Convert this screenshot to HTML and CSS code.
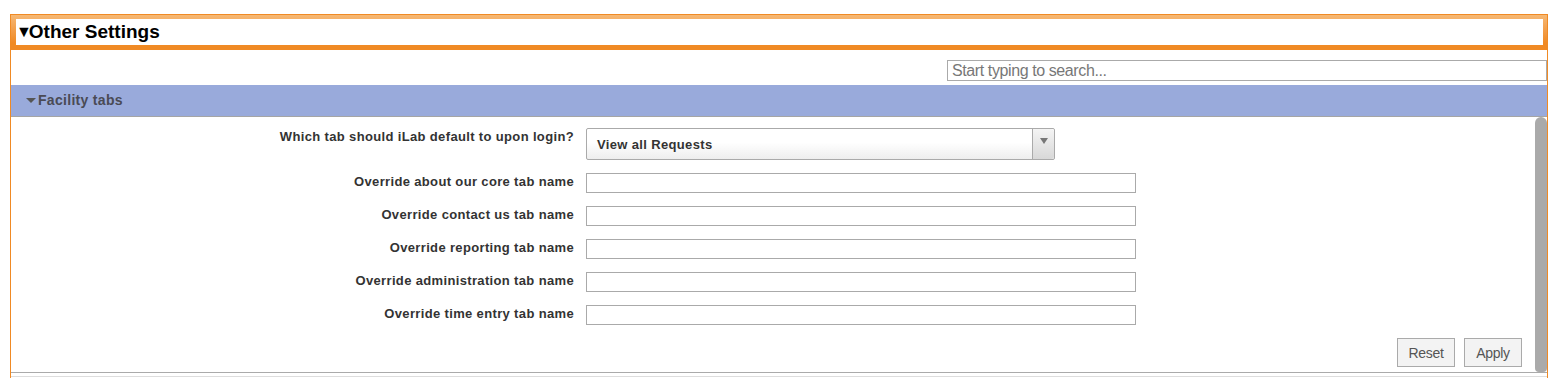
FILE: index.html
```html
<!DOCTYPE html>
<html>
<head>
<meta charset="utf-8">
<link rel="stylesheet" href="styles.css">
</head>
<body>
<div class="panel">
  <div class="panel-head">
    <div class="panel-title"><span class="tri">▼</span>Other Settings</div>
  </div>
  <div class="panel-body">
    <div class="search-row">
      <input class="search" type="text" placeholder="Start typing to search...">
    </div>
    <div class="section-bar"><span class="sec-tri"></span>Facility tabs</div>
    <div class="section-body">
      <div class="form">
        <div class="row row-select">
          <label class="lbl">Which tab should iLab default to upon login?</label>
          <div class="select">
            <span class="select-text">View all Requests</span>
            <span class="select-btn"><span class="select-arrow"></span></span>
          </div>
        </div>
        <div class="row">
          <label class="lbl">Override about our core tab name</label>
          <input class="field" type="text">
        </div>
        <div class="row">
          <label class="lbl">Override contact us tab name</label>
          <input class="field" type="text">
        </div>
        <div class="row">
          <label class="lbl">Override reporting tab name</label>
          <input class="field" type="text">
        </div>
        <div class="row">
          <label class="lbl">Override administration tab name</label>
          <input class="field" type="text">
        </div>
        <div class="row">
          <label class="lbl">Override time entry tab name</label>
          <input class="field" type="text">
        </div>
        <div class="actions">
          <button class="btn">Reset</button>
          <button class="btn">Apply</button>
        </div>
      </div>
      <div class="scrollbar"></div>
    </div>
    <div class="bottom-line"></div>
  </div>
</div>
</body>
</html>
```
FILE: styles.css
```css
html, body {
  margin: 0;
  padding: 0;
  background: #fff;
}
body {
  font-family: "Liberation Sans", Arial, sans-serif;
  padding-top: 14px;
  padding-left: 10px;
}
.panel {
  width: 1538px;
  border-left: 1px solid #f08a24;
  border-right: 1px solid #f08a24;
  border-top: 1px solid #f08a24;
  box-sizing: border-box;
  height: 364px;
  overflow: hidden;
}
.panel-head {
  background: linear-gradient(#f6b874 0px, #f3a04c 14px, #f08a24 28px, #f08a24 35px);
  padding: 4px 4px 5px 5px;
  height: 35px;
  box-sizing: border-box;
}
.panel-title {
  background: #fff;
  height: 26px;
  font-size: 19px;
  font-weight: bold;
  color: #000;
  line-height: 26px;
  padding-left: 1px;
}
.tri {
  display: inline-block;
  font-size: 16px;
  position: relative;
  top: -1px;
  margin-right: -3px;
  margin-left: -1px;
}
.panel-body {
  display: flex;
  flex-direction: column;
}
.search-row {
  display: flex;
  justify-content: flex-end;
  padding-top: 10px;
  height: 35px;
  box-sizing: border-box;
}
.search {
  width: 600px;
  height: 21px;
  box-sizing: border-box;
  border: 1px solid #aaa;
  font-family: "Liberation Sans", Arial, sans-serif;
  font-size: 16px;
  padding: 0 4px;
  margin: 0;
  outline: none;
}
.search::placeholder {
  color: #777;
  letter-spacing: -0.4px;
}
.section-bar {
  background: #99aadb;
  height: 32px;
  box-sizing: border-box;
  border-bottom: 1px solid #a5a5a5;
  font-size: 14px;
  letter-spacing: 0.3px;
  font-weight: bold;
  color: #4a4a55;
  display: flex;
  align-items: center;
  padding-left: 15px;
  padding-bottom: 1px;
}
.sec-tri {
  width: 0;
  height: 0;
  border-left: 5px solid transparent;
  border-right: 5px solid transparent;
  border-top: 5px solid #555;
  margin-right: 2px;
  margin-top: 1px;
}
.section-body {
  display: flex;
  height: 255px;
}
.form {
  flex: 1;
  padding-top: 11px;
}
.row {
  display: grid;
  grid-template-columns: 563px 550px;
  column-gap: 12px;
  align-items: center;
  height: 20px;
  margin-bottom: 13px;
}
.row-select {
  height: 32px;
  align-items: start;
  margin-bottom: 13px;
}
.lbl {
  text-align: right;
  font-size: 13px;
  letter-spacing: 0.35px;
  font-weight: bold;
  color: #333;
  white-space: nowrap;
  padding-bottom: 4px;
}
.row-select .lbl {
  padding-top: 1px;
  padding-bottom: 0;
}
.select {
  width: 469px;
  height: 32px;
  box-sizing: border-box;
  border: 1px solid #aaa;
  border-radius: 2px;
  background: linear-gradient(#fff 0%, #fff 45%, #eee 100%);
  display: flex;
  align-items: center;
  position: relative;
}
.select-text {
  flex: 1;
  font-size: 13px;
  letter-spacing: 0.35px;
  font-weight: bold;
  color: #333;
  padding-left: 10px;
}
.select-btn {
  width: 22px;
  height: 100%;
  border-left: 1px solid #aaa;
  background: linear-gradient(#f4f4f4, #d8d8d8);
  border-radius: 0 3px 3px 0;
  display: flex;
  justify-content: center;
  padding-top: 9px;
  box-sizing: border-box;
}
.select-arrow {
  width: 0;
  height: 0;
  border-left: 4px solid transparent;
  border-right: 4px solid transparent;
  border-top: 6px solid #777;
}
.field {
  width: 550px;
  height: 20px;
  box-sizing: border-box;
  border: 1px solid #aaa;
  margin: 0;
  padding: 0 3px;
  outline: none;
}
.actions {
  display: flex;
  justify-content: flex-end;
  gap: 9px;
  padding-right: 13px;
}
.btn {
  height: 29px;
  width: 58px;
  box-sizing: border-box;
  border: 1px solid #aaa;
  background: #f3f3f3;
  color: #555;
  font-family: "Liberation Sans", Arial, sans-serif;
  font-size: 14px;
  padding: 0;
  letter-spacing: -0.3px;
}
.scrollbar {
  width: 12px;
  background: #aaa;
  border-radius: 6px 6px 4px 4px;
}
.bottom-line {
  border-top: 1px solid #aaa;
  border-bottom: 1px solid #ddd;
  height: 3px;
}
```
